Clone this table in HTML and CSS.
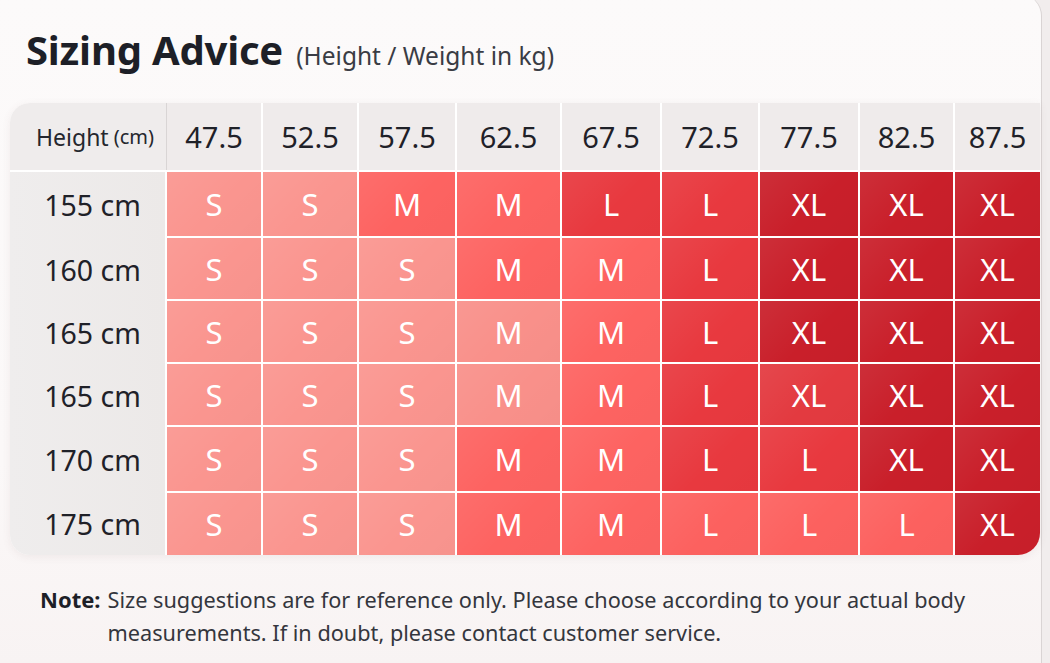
FILE: index.html
```html
<!DOCTYPE html>
<html lang="en">
<head>
<meta charset="utf-8">
<title>Sizing Advice</title>
<link rel="stylesheet" href="styles.css">
</head>
<body>
<div class="card">
  <h1 class="title">Sizing Advice <span class="subtitle">(Height / Weight in kg)</span></h1>
  <div class="chart">
    <div class="corner">Height <span class="unit">(cm)</span></div>
    <div class="head">47.5</div><div class="head">52.5</div><div class="head">57.5</div><div class="head">62.5</div><div class="head">67.5</div><div class="head">72.5</div><div class="head">77.5</div><div class="head">82.5</div><div class="head last">87.5</div>

    <div class="label">155 cm</div>
    <div class="c s">S</div><div class="c s">S</div><div class="c m">M</div><div class="c m">M</div><div class="c l">L</div><div class="c l">L</div><div class="c xl">XL</div><div class="c xl">XL</div><div class="c xl">XL</div>

    <div class="label">160 cm</div>
    <div class="c s">S</div><div class="c s">S</div><div class="c s">S</div><div class="c m">M</div><div class="c m">M</div><div class="c l">L</div><div class="c xl">XL</div><div class="c xl">XL</div><div class="c xl">XL</div>

    <div class="label">165 cm</div>
    <div class="c s">S</div><div class="c s">S</div><div class="c s">S</div><div class="c m-soft">M</div><div class="c m">M</div><div class="c l">L</div><div class="c xl">XL</div><div class="c xl">XL</div><div class="c xl">XL</div>

    <div class="label">165 cm</div>
    <div class="c s">S</div><div class="c s">S</div><div class="c s">S</div><div class="c m-soft">M</div><div class="c m">M</div><div class="c l">L</div><div class="c xl-soft">XL</div><div class="c xl">XL</div><div class="c xl">XL</div>

    <div class="label">170 cm</div>
    <div class="c s">S</div><div class="c s">S</div><div class="c s">S</div><div class="c m">M</div><div class="c m">M</div><div class="c l">L</div><div class="c l">L</div><div class="c xl">XL</div><div class="c xl">XL</div>

    <div class="label bottom-left">175 cm</div>
    <div class="c s">S</div><div class="c s">S</div><div class="c s">S</div><div class="c m">M</div><div class="c m">M</div><div class="c l-soft">L</div><div class="c l-soft">L</div><div class="c l-soft">L</div><div class="c xl">XL</div>
  </div>
  <div class="note">
    <span class="note-label">Note:</span>
    <span class="note-text">Size suggestions are for reference only. Please choose according to your actual body measurements. If in doubt, please contact customer service.</span>
  </div>
</div>
</body>
</html>
```

FILE: styles.css
```css
html, body {
  margin: 0;
  padding: 0;
}

body {
  background: #f1eded;
  font-family: "Noto Sans", "Open Sans", "DejaVu Sans", sans-serif;
  color: #1f2128;
  width: 1050px;
  height: 663px;
  overflow: hidden;
}

.card {
  margin: -6px 0 0 -30px;
  width: 1072px;
  height: 669px;
  box-sizing: border-box;
  padding: 28px 0 0 40px;
  background: linear-gradient(180deg, #fcfafa 0%, #fbf8f8 70%, #f8f3f3 100%);
  border-right: 1px solid #d9d4d4;
  border-radius: 0 22px 0 0;
}

.title {
  margin: 0 0 0 16px;
  height: 81px;
  font-size: 40px;
  font-weight: 700;
  line-height: 56px;
  color: #1d1f27;
  letter-spacing: -0.2px;
}

.subtitle {
  font-size: 24.5px;
  font-weight: 400;
  color: #3a3c44;
  letter-spacing: 0;
  margin-left: 3px;
}

.chart {
  display: grid;
  width: 1030px;
  grid-template-columns: 155px 94px 94px 96px 103px 98px 96px 98px 93px 85px;
  grid-template-rows: 67px 64px 61px 61px 61px 64px 62px;
  gap: 2px;
  background: #ffffff;
  border-radius: 20px 0 22px 20px;
  overflow: hidden;
  box-shadow: 0 2px 8px rgba(120, 80, 80, 0.08);
}

.chart > div {
  display: flex;
  align-items: center;
  justify-content: center;
}

.corner {
  background: #efecec;
  font-size: 23px;
  color: #25272e;
  padding-left: 14px;
  border-right: 1px solid #d9d5d5;
  margin-right: -2px;
}

.unit {
  font-size: 20px;
  margin-left: 5px;
}

.head {
  background: #efebeb;
  font-size: 29px;
  color: #1f2128;
}

.label {
  background: linear-gradient(90deg, #efeded 0%, #ece9e8 100%);
  font-size: 28.5px;
  color: #1f2128;
  padding-left: 10px;
  margin-bottom: -2px;
}

.label.bottom-left {
  margin-bottom: 0;
}

.c {
  color: #ffffff;
  font-size: 31px;
  background-image: linear-gradient(135deg, rgba(255, 255, 255, 0.07) 0%, rgba(255, 255, 255, 0) 55%, rgba(0, 0, 0, 0.015) 100%);
}

.s {
  background-color: #fa958f;
}

.m {
  background-color: #fd6361;
}

.m-soft {
  background-color: #f9908a;
}

.l {
  background-color: #e8393f;
}

.l-soft {
  background-color: #fc615f;
}

.xl {
  background-color: #c91f2a;
}

.xl-soft {
  background-color: #e33a40;
}

.note {
  display: flex;
  gap: 7px;
  margin: 28px 0 0 30px;
  width: 980px;
  font-size: 21.7px;
  line-height: 33px;
  color: #34363d;
}

.note-label {
  font-weight: 700;
  font-size: 22px;
  color: #1d1f27;
  flex: none;
}

.note-text {
  flex: 1;
}
```
